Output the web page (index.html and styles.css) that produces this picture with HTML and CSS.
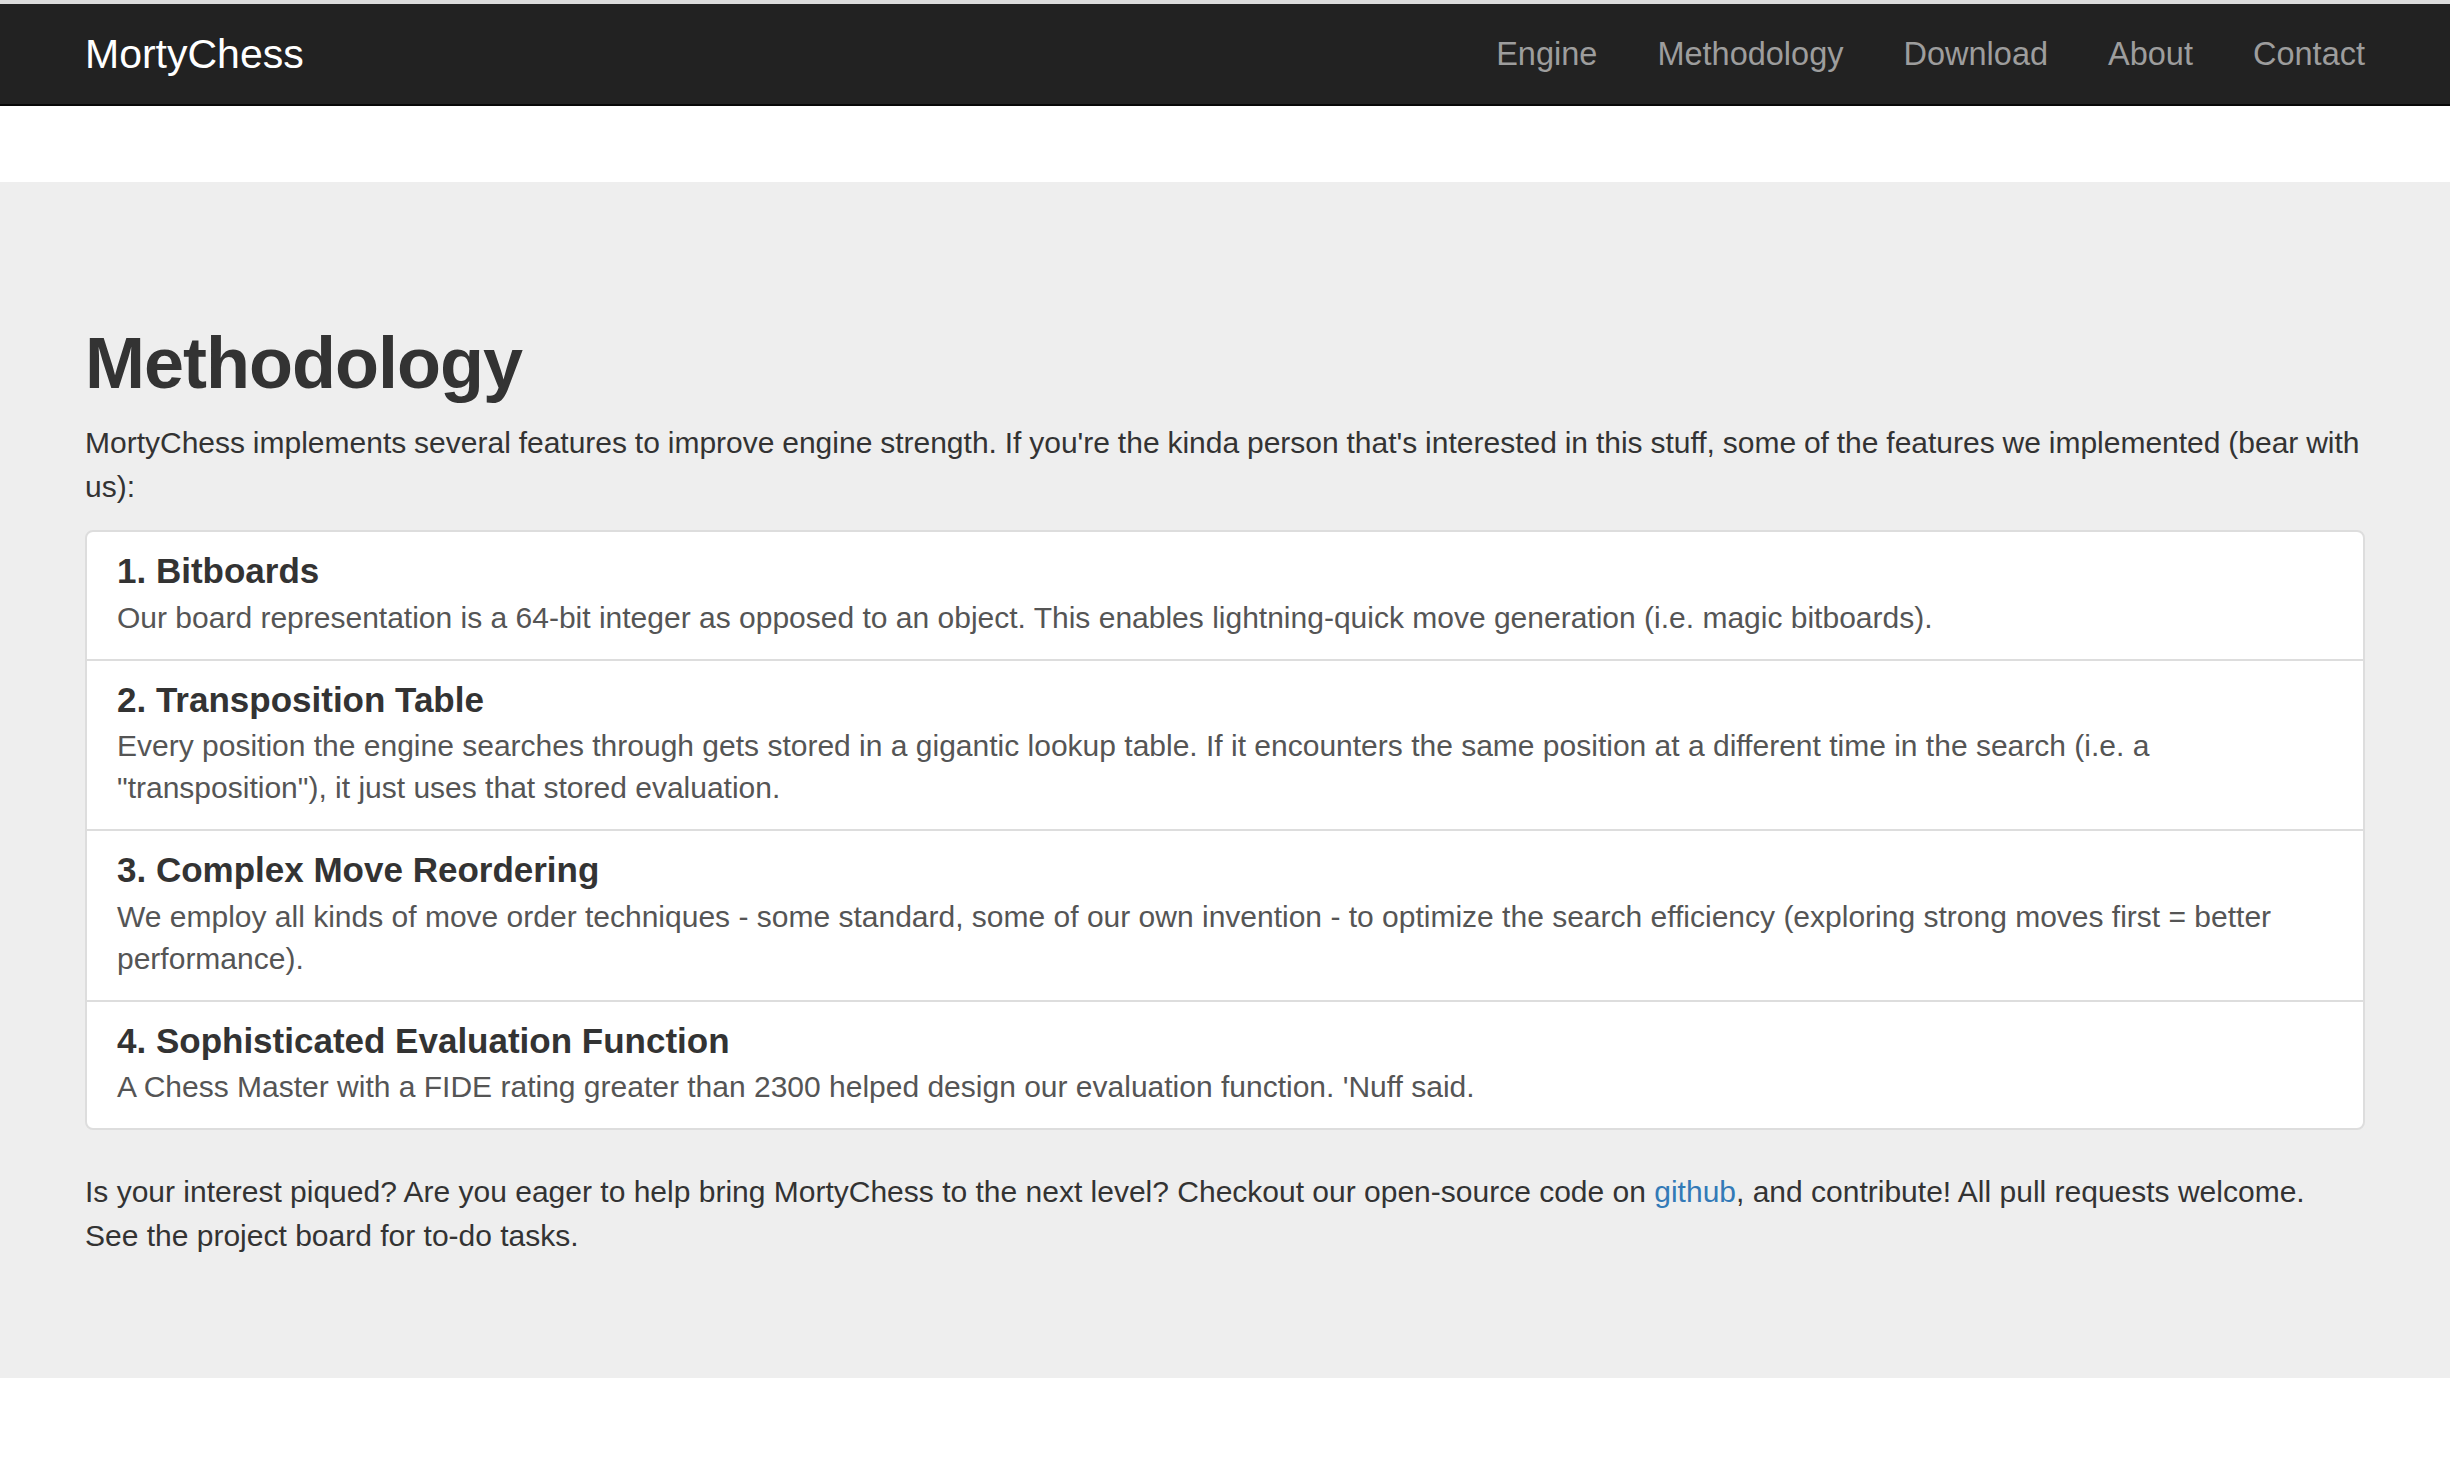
FILE: index.html
```html
<!DOCTYPE html>
<html lang="en">
<head>
<meta charset="utf-8">
<title>MortyChess - Methodology</title>
<link rel="stylesheet" href="styles.css">
</head>
<body class="page">
  <div class="top-strip"></div>
  <nav class="navbar">
    <div class="container navbar-inner">
      <a class="brand" href="#">MortyChess</a>
      <ul class="nav-links">
        <li><a href="#">Engine</a></li>
        <li><a href="#">Methodology</a></li>
        <li><a href="#">Download</a></li>
        <li><a href="#">About</a></li>
        <li><a href="#">Contact</a></li>
      </ul>
    </div>
  </nav>
  <div class="spacer"></div>
  <section class="jumbotron">
    <div class="container">
      <h1 class="title">Methodology</h1>
      <p class="lead">MortyChess implements several features to improve engine strength. If you're the kinda person that's interested in this stuff, some of the features we implemented (bear with us):</p>
      <div class="list-group">
        <div class="list-item">
          <h4 class="item-heading">1. Bitboards</h4>
          <p class="item-text">Our board representation is a 64-bit integer as opposed to an object. This enables lightning-quick move generation (i.e. magic bitboards).</p>
        </div>
        <div class="list-item">
          <h4 class="item-heading">2. Transposition Table</h4>
          <p class="item-text">Every position the engine searches through gets stored in a gigantic lookup table. If it encounters the same position at a different time in the search (i.e. a "transposition"), it just uses that stored evaluation.</p>
        </div>
        <div class="list-item">
          <h4 class="item-heading">3. Complex Move Reordering</h4>
          <p class="item-text">We employ all kinds of move order techniques - some standard, some of our own invention - to optimize the search efficiency (exploring strong moves first = better performance).</p>
        </div>
        <div class="list-item">
          <h4 class="item-heading">4. Sophisticated Evaluation Function</h4>
          <p class="item-text">A Chess Master with a FIDE rating greater than 2300 helped design our evaluation function. 'Nuff said.</p>
        </div>
      </div>
      <p class="closing">Is your interest piqued? Are you eager to help bring MortyChess to the next level? Checkout our open-source code on <a class="link" href="#">github</a>, and contribute! All pull requests welcome. See the project board for to-do tasks.</p>
    </div>
  </section>
</body>
</html>
```

FILE: styles.css
```css
* {
  box-sizing: border-box;
}

.page {
  margin: 0;
  background: #fff;
  font-family: "Liberation Sans", Arial, Helvetica, sans-serif;
  color: #333;
}

.top-strip {
  height: 4px;
  background: #dcdcdc;
}

.container {
  width: 2340px;
  margin: 0 auto;
  padding: 0 30px;
}

.navbar {
  background: #222;
  border-bottom: 2px solid #080808;
}

.navbar-inner {
  height: 100px;
  display: flex;
  align-items: center;
  justify-content: space-between;
}

.brand {
  font-size: 41px;
  color: #fff;
  text-decoration: none;
}

.nav-links {
  list-style: none;
  margin: 0 -30px 0 0;
  padding: 0;
  display: flex;
}

.nav-links a {
  display: block;
  padding: 0 30px;
  font-size: 32.5px;
  color: #9d9d9d;
  text-decoration: none;
}

.spacer {
  height: 76px;
}

.jumbotron {
  background: #eee;
  padding: 142px 0 120px;
}

.title {
  margin: 0 0 18px;
  font-size: 72px;
  line-height: 79px;
  font-weight: bold;
  letter-spacing: -1px;
  color: #333;
}

.lead {
  margin: 0 0 21px;
  font-size: 30px;
  line-height: 44px;
  word-spacing: -0.5px;
  color: #333;
}

.list-group {
  background: #fff;
  border: 2px solid #ddd;
  border-radius: 8px;
  margin-bottom: 40px;
}

.list-item {
  padding: 20px 30px;
}

.list-item + .list-item {
  border-top: 2px solid #ddd;
}

.item-heading {
  margin: 0 0 6px;
  font-size: 35px;
  line-height: 38.5px;
  font-weight: bold;
  color: #333;
}

.item-text {
  margin: 0;
  font-size: 30px;
  line-height: 42px;
  color: #555;
}

.closing {
  margin: 0;
  font-size: 30px;
  line-height: 44px;
  color: #333;
}

.link {
  color: #337ab7;
  text-decoration: none;
}
```
